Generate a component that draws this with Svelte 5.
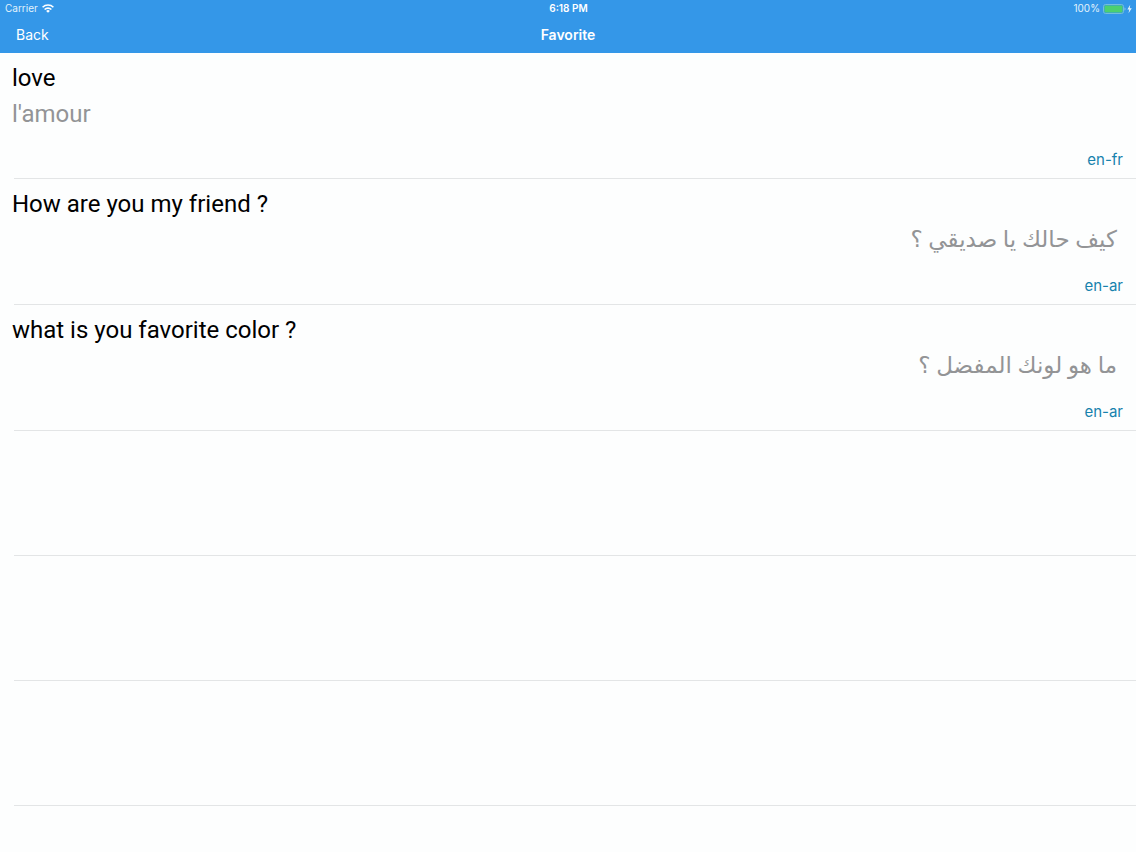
<script lang="ts">
  type Favorite = { id: number; source: string; result: string; from: string; to: string };

  const favorites: Favorite[] = [
    { id: 1, source: 'love', result: "l'amour", from: 'en', to: 'fr' },
    { id: 2, source: 'How are you my friend ?', result: 'كيف حالك يا صديقي ؟', from: 'en', to: 'ar' },
    { id: 3, source: 'what is you favorite color ?', result: 'ما هو لونك المفضل ؟', from: 'en', to: 'ar' }
  ];

  const blankRows = 3;
  const rtl = ['ar', 'fa', 'he', 'ur'];
</script>

<div class="screen">
  <header>
    <div class="status">
      <div class="left">
        <span>Carrier</span>
        <svg width="12" height="9" viewBox="0 0 12 9" aria-hidden="true">
          <g fill="none" stroke="currentColor" stroke-width="1.6">
            <path d="M0.6 3.3a7.6 7.6 0 0 1 10.8 0" />
            <path d="M2.6 5.5a4.8 4.8 0 0 1 6.8 0" />
          </g>
          <path d="M4.1 6.9a2.7 2.7 0 0 1 3.8 0L6 8.8z" fill="currentColor" />
        </svg>
      </div>
      <time>6:18 PM</time>
      <div class="right">
        <span>100%</span>
        <svg width="29" height="10" viewBox="0 0 29 10" aria-hidden="true">
          <rect x="0.5" y="0.5" width="20" height="9" rx="2" fill="none" stroke="#74bedb" />
          <rect x="1.5" y="1.5" width="18" height="7" rx="1" fill="#4cd070" />
          <path d="M21.5 3.5a1.6 1.6 0 0 1 0 3z" fill="#8cc8dc" />
          <path d="M27.2 0.8L24.4 5.4h1.9l-0.8 3.8 3.3-5h-2.1z" fill="currentColor" />
        </svg>
      </div>
    </div>
    <nav>
      <button type="button">Back</button>
      <h1>Favorite</h1>
    </nav>
  </header>

  <ul>
    {#each favorites as f (f.id)}
      <li>
        <p class="source">{f.source}</p>
        <p class="result" lang={f.to} dir={rtl.includes(f.to) ? 'rtl' : 'ltr'}>{f.result}</p>
        <p class="pair">{f.from}-{f.to}</p>
      </li>
    {/each}
    {#each { length: blankRows } as _}
      <li class="blank" aria-hidden="true"></li>
    {/each}
  </ul>
</div>

<style>
  :global(body) {
    margin: 0;
    background: #fdfefe;
  }
  .screen {
    min-height: 100vh;
    font-family: Inter, 'Liberation Sans', 'DejaVu Sans', sans-serif;
    color: #000;
  }
  header {
    background: #3497e8;
    color: #fff;
  }
  .status {
    display: grid;
    grid-template-columns: 1fr auto 1fr;
    align-items: center;
    height: 17px;
    padding: 0 4px 0 5px;
    font-size: 10px;
    line-height: 17px;
  }
  .left,
  .right {
    display: flex;
    align-items: center;
    gap: 4px;
    color: #e2f3fc;
  }
  .left svg {
    color: #fff;
  }
  .right {
    justify-content: flex-end;
    gap: 3px;
  }
  .status time {
    font-weight: 600;
  }
  nav {
    display: grid;
    grid-template-columns: 1fr auto 1fr;
    align-items: center;
    height: 34px;
    padding: 0 16px 2px;
  }
  button {
    justify-self: start;
    padding: 0;
    border: 0;
    background: none;
    color: inherit;
    font: inherit;
    font-size: 14px;
    cursor: pointer;
  }
  h1 {
    margin: 0;
    font-size: 14px;
    font-weight: 600;
  }
  ul {
    margin: 0;
    padding: 0 0 0 14px;
    list-style: none;
  }
  li {
    box-sizing: border-box;
    min-height: 126px;
    padding: 7px 13px 4px 0;
    border-bottom: 1px solid #e3e5e6;
  }
  .blank {
    min-height: 125px;
  }
  p {
    margin: 0;
  }
  .source,
  .result {
    margin-left: -2px;
    font-family: Roboto, 'DejaVu Sans', sans-serif;
    font-size: 24px;
    line-height: 36px;
  }
  .result {
    color: #939496;
  }
  .result[dir='rtl'] {
    padding-right: 6px;
    font-size: 23px;
  }
  .pair {
    margin-top: 14px;
    color: #1782ad;
    font-size: 15px;
    line-height: 28px;
    text-align: right;
  }
</style>
